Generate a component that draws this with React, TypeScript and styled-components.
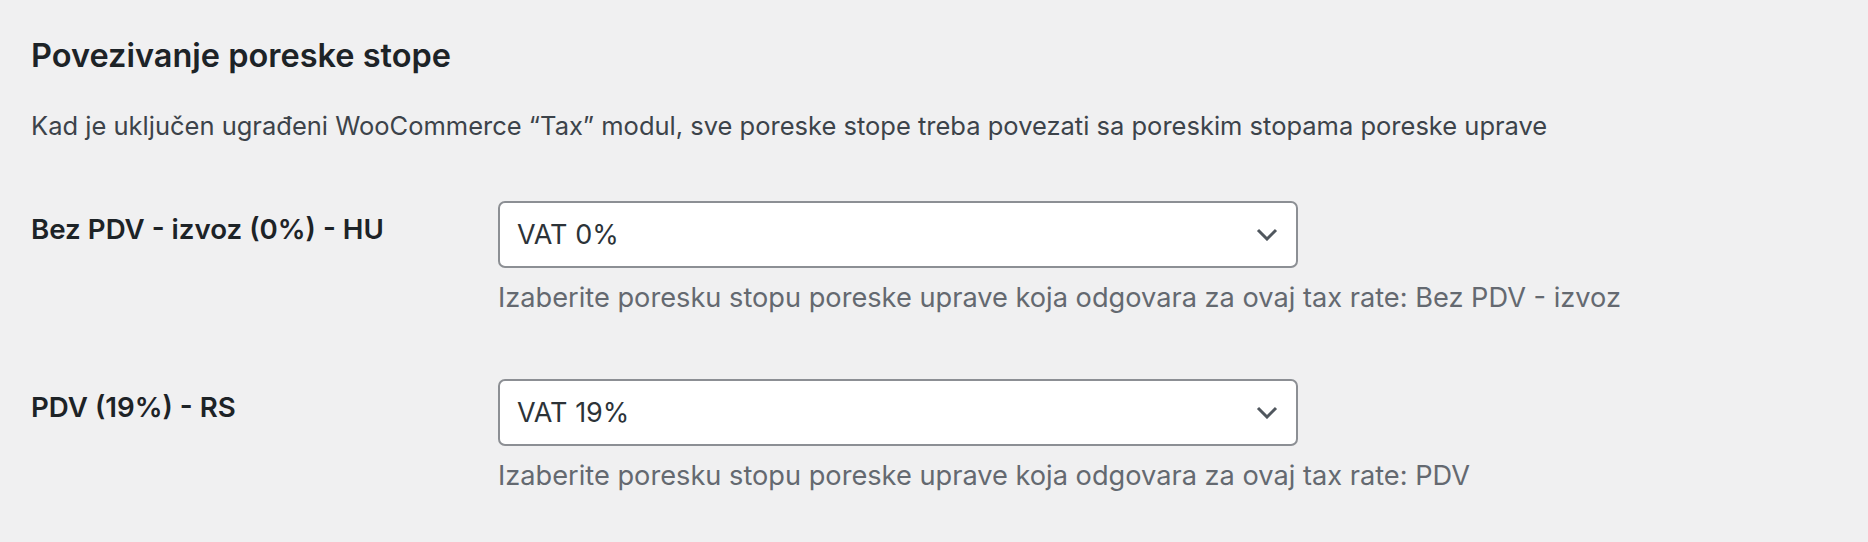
import React from 'react'
import styled, { createGlobalStyle } from 'styled-components'

const GlobalStyle = createGlobalStyle`
  html, body {
    margin: 0;
    padding: 0;
    background: #f0f0f1;
  }
  body {
    font-family: Inter, "Noto Sans", "Liberation Sans", sans-serif;
    color: #3c434a;
  }
`

type TaxRow = {
  label: string
  value: string
  rateName: string
}

const rows: TaxRow[] = [
  { label: 'Bez PDV - izvoz (0%) - HU', value: 'VAT 0%', rateName: 'Bez PDV - izvoz' },
  { label: 'PDV (19%) - RS', value: 'VAT 19%', rateName: 'PDV' },
]

const ChevronDown = () => (
  <svg width="22" height="13" viewBox="0 0 22 13" fill="none" aria-hidden="true">
    <polyline
      points="2,2 11,11 20,2"
      stroke="#50575e"
      strokeWidth="3"
      strokeLinecap="butt"
      strokeLinejoin="miter"
    />
  </svg>
)

export default function App() {
  return (
    <>
      <GlobalStyle />
      <Page>
        <Heading>Povezivanje poreske stope</Heading>
        <Intro>
          Kad je uključen ugrađeni WooCommerce “Tax” modul, sve poreske stope treba povezati sa
          poreskim stopama poreske uprave
        </Intro>
        <FormTable>
          {rows.map((row) => (
            <FormRow key={row.label}>
              <RowLabel>{row.label}</RowLabel>
              <RowField>
                <SelectBox role="combobox" aria-expanded="false">
                  <SelectValue>{row.value}</SelectValue>
                  <ChevronDown />
                </SelectBox>
                <HelpText>
                  Izaberite poresku stopu poreske uprave koja odgovara za ovaj tax rate:{' '}
                  {row.rateName}
                </HelpText>
              </RowField>
            </FormRow>
          ))}
        </FormTable>
      </Page>
    </>
  )
}

const Page = styled.div`
  padding: 36px 0 0 31px;
  width: 1837px;
  height: 506px;
  box-sizing: border-box;
`

const Heading = styled.h2`
  margin: 0;
  font-size: 32.5px;
  line-height: 40px;
  font-weight: 600;
  color: #1d2327;
`

const Intro = styled.p`
  margin: 33px 0 0;
  font-size: 25.5px;
  line-height: 34px;
  color: #3c434a;
`

const FormTable = styled.div`
  display: flex;
  flex-direction: column;
  gap: 64px;
  margin-top: 58px;
`

const FormRow = styled.div`
  display: grid;
  grid-template-columns: 467px 1fr;
  align-items: start;
`

const RowLabel = styled.div`
  padding-top: 11px;
  font-size: 27.7px;
  line-height: 34px;
  font-weight: 600;
  color: #1d2327;
  white-space: nowrap;
`

const RowField = styled.div`
  display: flex;
  flex-direction: column;
  align-items: flex-start;
`

const SelectBox = styled.div`
  box-sizing: border-box;
  height: 67px;
  width: 800px;
  display: flex;
  align-items: center;
  justify-content: space-between;
  padding: 0 18px 0 17px;
  background: #ffffff;
  border: 2px solid #8c8f94;
  border-radius: 7px;
  cursor: pointer;
`

const SelectValue = styled.span`
  font-size: 27px;
  color: #2c3338;
`

const HelpText = styled.p`
  margin: 13px 0 0 0;
  font-size: 27.2px;
  line-height: 34px;
  color: #646970;
  white-space: nowrap;
`
